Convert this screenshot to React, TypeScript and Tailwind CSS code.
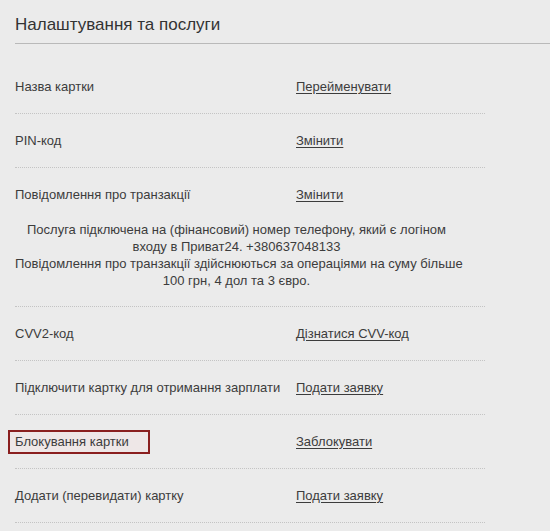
import React from 'react';

type Row = {
  label: string;
  action: string;
  marked?: boolean;
  note?: string[];
};

export default function App() {
  const rows: Row[] = [
    { label: 'Назва картки', action: 'Перейменувати' },
    { label: 'PIN-код', action: 'Змінити' },
    {
      label: 'Повідомлення про транзакції',
      action: 'Змінити',
      note: [
        'Послуга підключена на (фінансовий) номер телефону, який є логіном',
        'входу в Приват24. +380637048133',
        'Повідомлення про транзакції здійснюються за операціями на суму більше',
        '100 грн, 4 дол та 3 євро.',
      ],
    },
    { label: 'CVV2-код', action: 'Дізнатися CVV-код' },
    { label: 'Підключити картку для отримання зарплати', action: 'Подати заявку' },
    { label: 'Блокування картки', action: 'Заблокувати', marked: true },
    { label: 'Додати (перевидати) картку', action: 'Подати заявку' },
  ];

  return (
    <div className="min-h-screen w-full bg-[#ebebeb] text-[#3c3c3c] font-[family-name:'Liberation_Sans',Arial,sans-serif]">
      <div className="ml-[15px] border-b border-[#b9b9b9] pt-[14px] pb-[7px]">
        <h1 className="text-[17px] leading-[22px] font-normal text-[#333]">Налаштування та послуги</h1>
      </div>

      <div className="ml-[15px] w-[470px] pt-[16px]">
        {rows.map((row) => (
          <div key={row.label} className="border-b border-dotted border-[#c4c4c4]">
            <div className="grid h-[53px] grid-cols-[281px_1fr] items-center text-[13px]">
              <div>
                {row.marked ? (
                  <span className="-ml-[7px] inline-block h-[24px] w-[142px] border-2 border-[#8a1f1f] bg-[#eee7e7] px-[5px] leading-[20px]">
                    {row.label}
                  </span>
                ) : (
                  <span>{row.label}</span>
                )}
              </div>
              <a href="#" className="text-[#3c3c3c] underline underline-offset-2">
                {row.action}
              </a>
            </div>
            {row.note && (
              <p className="whitespace-nowrap pr-[27px] pb-[17px] text-center text-[13px] leading-[17px]">
                {row.note.map((line) => (
                  <span key={line} className="block">
                    {line}
                  </span>
                ))}
              </p>
            )}
          </div>
        ))}
      </div>
    </div>
  );
}
